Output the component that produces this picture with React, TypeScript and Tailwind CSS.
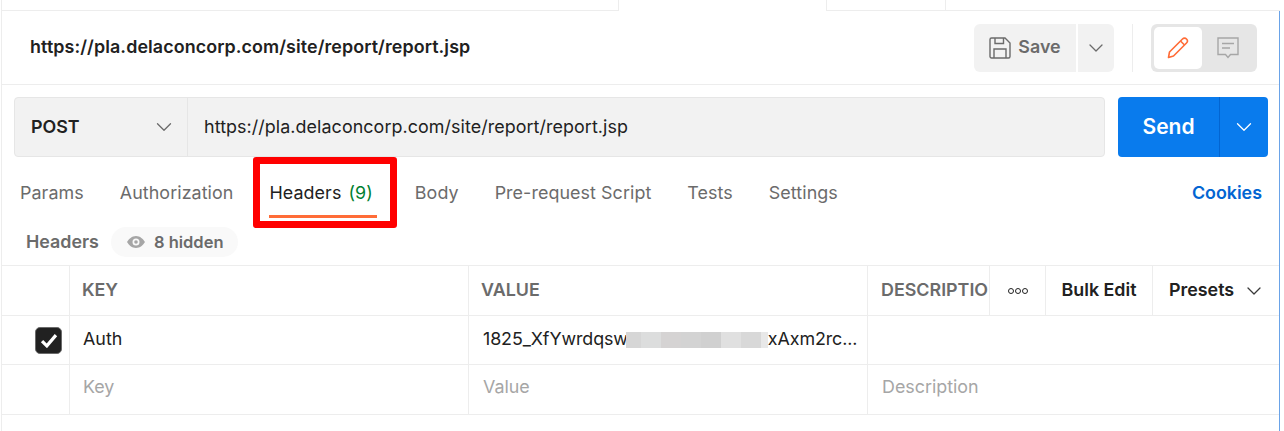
import { ChevronDown } from 'lucide-react'

const font = { fontFamily: 'Inter, "Liberation Sans", sans-serif' }

const tabs = ['Params', 'Authorization']
const moreTabs = ['Body', 'Pre-request Script', 'Tests', 'Settings']

const blurCells = [
  { w: 15, c: '#d6d6d6' },
  { w: 20, c: '#dcdddd' },
  { w: 20, c: '#d5d3d3' },
  { w: 20, c: '#d3d3d3' },
  { w: 20, c: '#d0d0d0' },
  { w: 20, c: '#e0e0e0' },
  { w: 20, c: '#d8d8d8' },
  { w: 7, c: '#e8e8e8' },
]

function Chevron({ size = 26, color = '#6b6b6b' }: { size?: number; color?: string }) {
  return <ChevronDown size={size} color={color} strokeWidth={(1.3 * 24) / size} />
}

function SaveIcon() {
  return (
    <svg width="22" height="22" viewBox="0 0 22 22" fill="none" stroke="#6b6b6b" strokeWidth="1.4">
      <path d="M1 2.500A1.500 1.500 0 0 1 2.500 1H16l5 5v13.500a1.500 1.500 0 0 1-1.500 1.500h-17A1.500 1.500 0 0 1 1 19.500z" />
      <path d="M6 1v5.500h8.500V1" />
      <path d="M5 21v-9h12v9" />
    </svg>
  )
}

function PencilIcon() {
  return (
    <svg width="22" height="22" viewBox="0 0 22 22" fill="none" stroke="#ff6c37" strokeWidth="1.6" strokeLinejoin="round">
      <path d="M1.500 20.500L2.500 15 15.500 2a2.800 2.800 0 0 1 4 4L6.500 19z" />
      <path d="M13.500 4l4 4" />
    </svg>
  )
}

function CommentIcon() {
  return (
    <svg width="22" height="22" viewBox="0 0 22 22" fill="none" stroke="#a6a6a6" strokeWidth="1.4">
      <path d="M1 1h20v16.500h-7.500L11 20.500l-2.500-3H1z" />
      <path d="M5 6.500h12M5 11h8" />
    </svg>
  )
}

function EyeIcon() {
  return (
    <svg width="18" height="12" viewBox="0 0 18 12" fill="#a6a6a6">
      <path fillRule="evenodd" d="M9 0c4 0 7.200 3 9 6-1.800 3-5 6-9 6S1.800 9 0 6c1.800-3 5-6 9-6zm0 2.500a3.500 3.500 0 1 0 0 7 3.500 3.500 0 0 0 0-7z" />
      <circle cx="9" cy="6" r="1.800" />
    </svg>
  )
}

export default function App() {
  return (
    <div className="relative w-[1284px] h-[431px] overflow-hidden bg-white text-[17.875px] text-[#212121]" style={font}>
      <div className="ml-px mr-[4px] h-[431px] border-l border-l-[#ededed]">
        {/* Top tab strip */}
        <div className="flex h-[11px]">
          <div className="w-[617px] border-b border-r border-[#ededed]" />
          <div className="w-[207px]" />
          <div className="w-[120px] border-b border-l border-r border-[#ededed]" />
          <div className="flex-1 border-b border-[#ededed]" />
        </div>

        <div className="h-[420px] border-r border-r-[#6aa3e8]">
          {/* Request title row */}
          <div className="flex h-[74px] items-center justify-between border-b border-[#ededed] pl-[28px] pr-[22px]">
            <span className="font-semibold tracking-[0.1px]">https://pla.delaconcorp.com/site/report/report.jsp</span>
            <div className="flex items-center">
              <button className="flex h-[48px] w-[102px] items-center justify-center gap-[7px] rounded-l-[6px] bg-[#f2f2f2] font-semibold text-[#6b6b6b]">
                <SaveIcon />
                Save
              </button>
              <button className="ml-[2px] flex h-[48px] w-[36px] items-center justify-center rounded-r-[6px] bg-[#f2f2f2]">
                <Chevron size={24} />
              </button>
              <div className="mx-[18px] h-[48px] w-px bg-[#ededed]" />
              <div className="flex h-[48px] w-[106px] items-center rounded-[6px] bg-[#e6e6e6] p-[3px]">
                <div className="flex h-[42px] w-[48px] items-center justify-center rounded-[5px] bg-white">
                  <PencilIcon />
                </div>
                <div className="flex flex-1 items-center justify-center">
                  <CommentIcon />
                </div>
              </div>
            </div>
          </div>

          {/* URL row */}
          <div className="mt-[12px] flex h-[60px] pl-[12px] pr-[11px]">
            <div className="flex flex-1 rounded-[4px] border border-[#e6e6e6] bg-[#f2f2f2]">
              <div className="flex w-[173px] items-center justify-between border-r border-[#e6e6e6] pl-[16px] pr-[10px] font-semibold">
                POST
                <Chevron />
              </div>
              <div className="flex flex-1 items-center pl-[16px] tracking-[0.08px]">https://pla.delaconcorp.com/site/report/report.jsp</div>
            </div>
            <div className="ml-[13px] flex w-[150px] overflow-hidden rounded-[4px] bg-[#097bed] text-white">
              <div className="flex w-[102px] items-center justify-center border-r border-[#0265d2] text-[21px] font-semibold">Send</div>
              <div className="flex flex-1 items-center justify-center">
                <Chevron color="#ffffff" />
              </div>
            </div>
          </div>

          {/* Tabs */}
          <div className="flex h-[70px] items-center justify-between pl-[18px] pr-[17px] pt-[2px] text-[#6b6b6b]">
            <div className="flex gap-[36px] tracking-[0.08px]">
              {tabs.map(t => <span key={t}>{t}</span>)}
              <span className="mr-[6px] text-[#212121]">
                Headers <span className="ml-[2px] text-[#007f31]">(9)</span>
              </span>
              {moreTabs.map(t => <span key={t}>{t}</span>)}
            </div>
            <span className="font-semibold text-[#0265d2]">Cookies</span>
          </div>

          {/* Headers summary */}
          <div className="flex h-[38px] items-start pl-[24px]">
            <span className="mt-[2px] font-semibold text-[#6b6b6b]">Headers</span>
            <div className="ml-[12px] flex h-[30px] items-center gap-[9px] rounded-full bg-[#f9f9f9] pl-[16px] pr-[14px] text-[16.500px] font-semibold text-[#6b6b6b]">
              <EyeIcon />
              8 hidden
            </div>
          </div>

          {/* Table */}
          <div className="border-t border-[#ededed]">
            <div className="flex h-[50px] items-center border-b border-[#ededed] font-semibold text-[#6b6b6b]">
              <div className="h-full w-[68px] border-r border-[#ededed]" />
              <div className="flex h-full w-[399px] items-center border-r border-[#ededed] pl-[12px]">KEY</div>
              <div className="flex h-full w-[399px] items-center border-r border-[#ededed] pl-[12px]">VALUE</div>
              <div className="flex h-full w-[122px] items-center overflow-hidden whitespace-nowrap border-r border-[#ededed] pl-[13px]">DESCRIPTIO</div>
              <div className="flex h-full w-[56px] items-center justify-center gap-[1px] border-r border-[#ededed]">
                <span className="size-[6px] rounded-full border-[1.500px] border-[#212121]" />
                <span className="size-[6px] rounded-full border-[1.500px] border-[#212121]" />
                <span className="size-[6px] rounded-full border-[1.500px] border-[#212121]" />
              </div>
              <div className="flex h-full w-[107px] items-center justify-center border-r border-[#ededed] text-[#212121]">Bulk Edit</div>
              <div className="flex flex-1 items-center gap-[8px] pl-[16px] text-[#212121]">
                Presets
                <Chevron size={24} color="#3a3a3a" />
              </div>
            </div>

            <div className="flex h-[49px] border-b border-[#ededed]">
              <div className="flex w-[68px] items-center justify-end border-r border-[#ededed] pr-[7px]">
                <div className="flex size-[27px] items-center justify-center rounded-[5px] border border-[#6b6b6b] bg-[#212121]">
                  <svg width="18" height="15" viewBox="0 0 16 14" fill="none" stroke="#ffffff" strokeWidth="3">
                    <path d="M1.500 7.500l4.500 4.500 8.500-10" />
                  </svg>
                </div>
              </div>
              <div className="flex w-[399px] items-center border-r border-[#ededed] pb-[1px] pl-[13px]">Auth</div>
              <div className="flex w-[399px] items-center whitespace-nowrap border-r border-[#ededed] pb-[1px] pl-[14px] tracking-[-0.1px]">
                1825_XfYwrdqsw
                <span className="-ml-[2px] flex h-[16px] shrink-0">
                  {blurCells.map((b, i) => (
                    <span key={i} className="h-full" style={{ width: b.w, background: b.c }} />
                  ))}
                </span>
                xAxm2rc...
              </div>
              <div className="flex-1" />
            </div>

            <div className="flex h-[50px] border-b border-[#ededed] text-[#a6a6a6]">
              <div className="w-[68px] border-r border-[#ededed]" />
              <div className="flex w-[399px] items-center border-r border-[#ededed] pb-[4px] pl-[13px]">Key</div>
              <div className="flex w-[399px] items-center border-r border-[#ededed] pb-[4px] pl-[14px]">Value</div>
              <div className="flex flex-1 items-center pb-[4px] pl-[14px]">Description</div>
            </div>
          </div>
        </div>
      </div>

      {/* Red annotation box */}
      <div className="absolute left-[253px] top-[157px] h-[71px] w-[144px] rounded-[3px] border-[7px] border-[#ff0000]">
        <div className="absolute bottom-[3px] left-[9px] h-[3px] w-[108px] bg-[#ff6c37]" />
      </div>
    </div>
  )
}
